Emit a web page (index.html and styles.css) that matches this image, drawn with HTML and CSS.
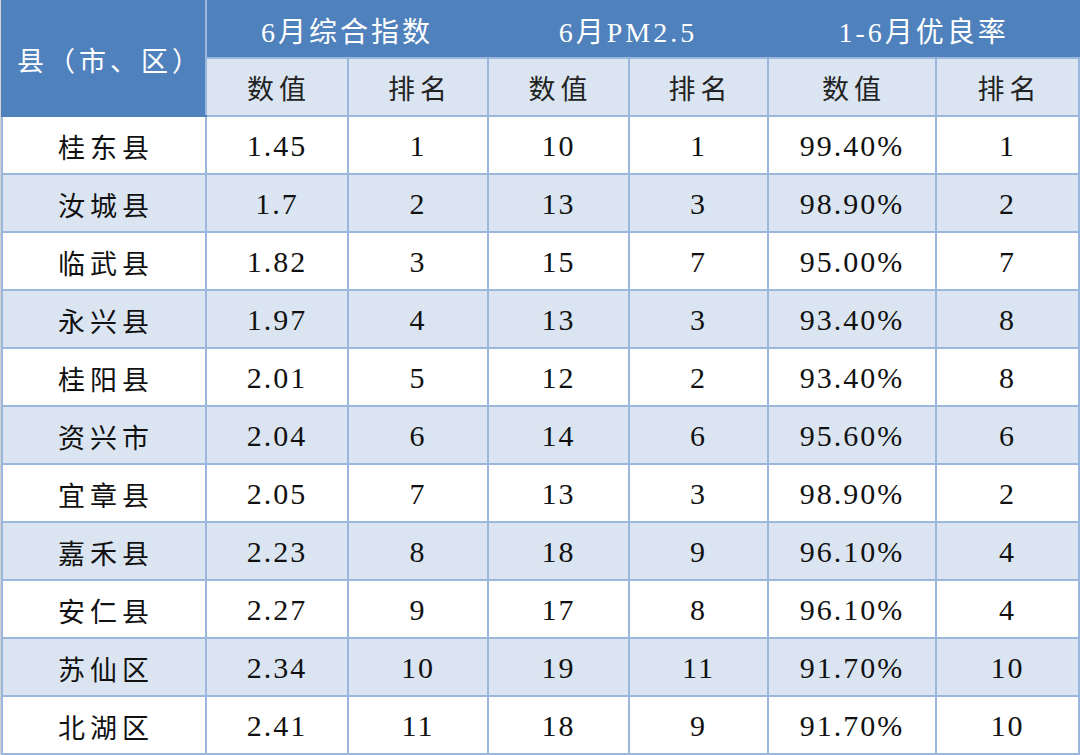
FILE: index.html
```html
<!DOCTYPE html>
<html lang="zh">
<head>
<meta charset="utf-8">
<link rel="stylesheet" href="styles.css">
</head>
<body>
<table class="data">
  <colgroup>
    <col class="c1"><col class="c2"><col class="c3"><col class="c4"><col class="c5"><col class="c6"><col class="c7">
  </colgroup>
  <thead>
    <tr class="h1">
      <th rowspan="2" class="region">县（市、区）</th>
      <th colspan="2">6月综合指数</th>
      <th colspan="2">6月PM2.5</th>
      <th colspan="2">1-6月优良率</th>
    </tr>
    <tr class="h2">
      <th>数值</th><th>排名</th><th>数值</th><th>排名</th><th>数值</th><th>排名</th>
    </tr>
  </thead>
  <tbody>
    <tr><td class="name">桂东县</td><td>1.45</td><td>1</td><td>10</td><td>1</td><td>99.40%</td><td>1</td></tr>
    <tr class="alt"><td class="name">汝城县</td><td>1.7</td><td>2</td><td>13</td><td>3</td><td>98.90%</td><td>2</td></tr>
    <tr><td class="name">临武县</td><td>1.82</td><td>3</td><td>15</td><td>7</td><td>95.00%</td><td>7</td></tr>
    <tr class="alt"><td class="name">永兴县</td><td>1.97</td><td>4</td><td>13</td><td>3</td><td>93.40%</td><td>8</td></tr>
    <tr><td class="name">桂阳县</td><td>2.01</td><td>5</td><td>12</td><td>2</td><td>93.40%</td><td>8</td></tr>
    <tr class="alt"><td class="name">资兴市</td><td>2.04</td><td>6</td><td>14</td><td>6</td><td>95.60%</td><td>6</td></tr>
    <tr><td class="name">宜章县</td><td>2.05</td><td>7</td><td>13</td><td>3</td><td>98.90%</td><td>2</td></tr>
    <tr class="alt"><td class="name">嘉禾县</td><td>2.23</td><td>8</td><td>18</td><td>9</td><td>96.10%</td><td>4</td></tr>
    <tr><td class="name">安仁县</td><td>2.27</td><td>9</td><td>17</td><td>8</td><td>96.10%</td><td>4</td></tr>
    <tr class="alt"><td class="name">苏仙区</td><td>2.34</td><td>10</td><td>19</td><td>11</td><td>91.70%</td><td>10</td></tr>
    <tr><td class="name">北湖区</td><td>2.41</td><td>11</td><td>18</td><td>9</td><td>91.70%</td><td>10</td></tr>
  </tbody>
</table>
</body>
</html>
```

FILE: styles.css
```css
html, body {
  margin: 0;
  padding: 0;
  background: #ffffff;
}

body {
  width: 1080px;
  height: 755px;
  overflow: hidden;
  border-left: 1px solid #d4d4d4;
  box-sizing: border-box;
}

.data {
  border-collapse: collapse;
  table-layout: fixed;
  width: 1079px;
  font-family: "Liberation Serif", "Noto Sans CJK SC", serif;
  font-size: 30px;
  color: #111111;
}

.c1 { width: 204px; }
.c2 { width: 142px; }
.c3 { width: 140px; }
.c4 { width: 141px; }
.c5 { width: 139px; }
.c6 { width: 168px; }
.c7 { width: 143px; }

.data th,
.data td {
  border: 2px solid #9bb7dd;
  padding: 0;
  text-align: center;
  vertical-align: middle;
  font-weight: normal;
  white-space: nowrap;
}

.h1 { height: 57px; }
.h2 { height: 58px; }

.h1 th {
  background: #4f81bd;
  color: #ffffff;
  border-color: #4f81bd;
  border-bottom-color: #9bb7dd;
  font-size: 28px;
  letter-spacing: 3px;
}

.h1 th.region {
  border-bottom-color: #4f81bd;
  border-right-color: #9bb7dd;
  text-align: left;
  padding-left: 14px;
  padding-top: 2px;
  font-size: 27px;
  letter-spacing: 4px;
}

.h2 th {
  background: #dbe5f1;
  color: #222222;
  font-size: 27px;
  letter-spacing: 5px;
  padding-left: 4px;
}

.data tbody tr { height: 58px; }

.data td {
  background: #ffffff;
  padding-top: 2px;
  letter-spacing: 2px;
}

.data tbody tr.alt td {
  background: #dbe5f1;
}

.data td.name {
  font-size: 27px;
  letter-spacing: 5px;
  padding-left: 4px;
}
```
